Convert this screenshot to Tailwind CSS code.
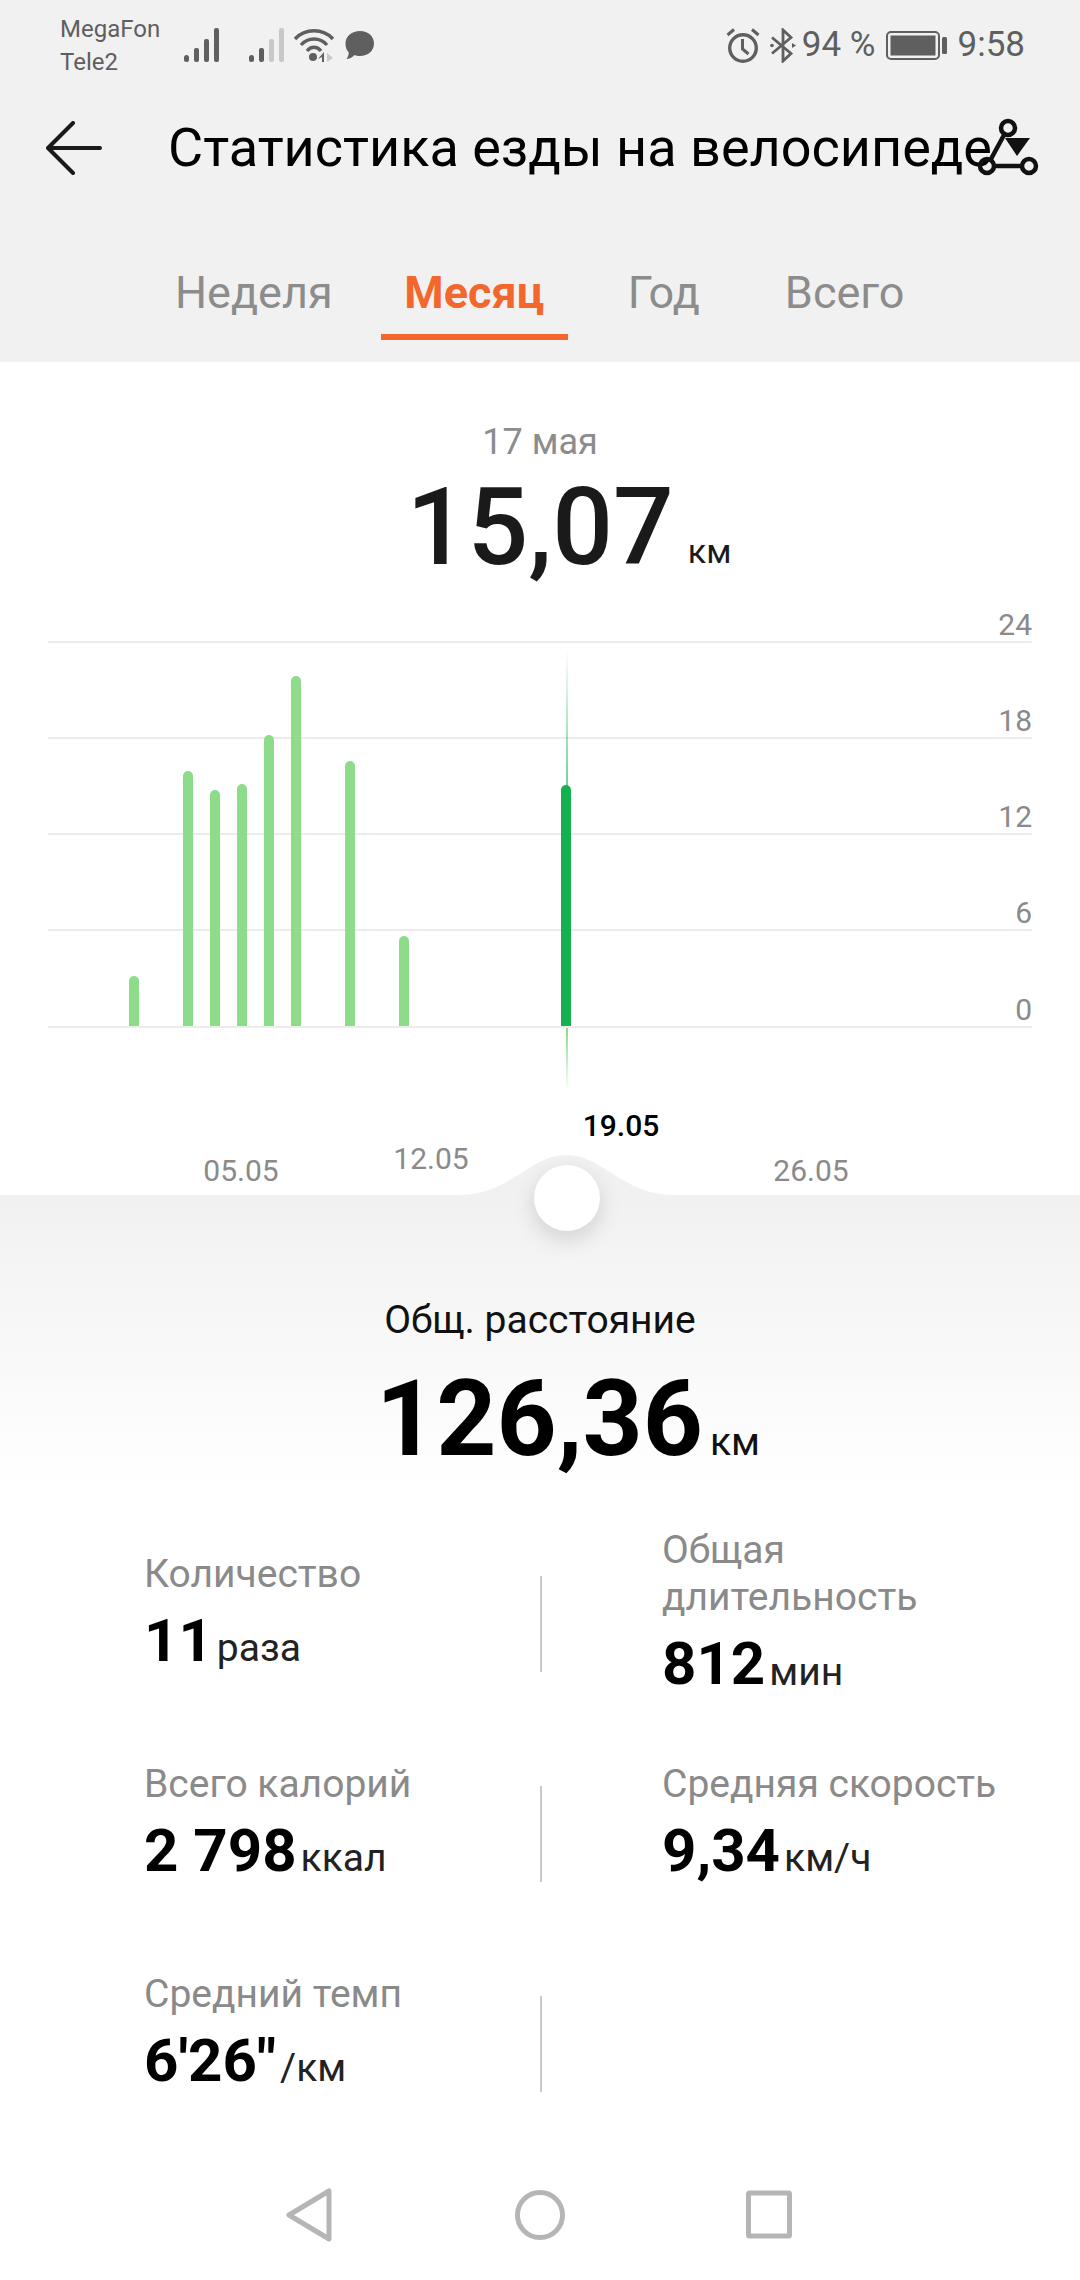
<!DOCTYPE html>
<html lang="ru">
<head>
<meta charset="UTF-8">
<title>Статистика езды на велосипеде</title>
<script src="https://cdn.jsdelivr.net/npm/@tailwindcss/browser@4"></script>
</head>
<body class="bg-white">
<div class="w-[1080px] h-[2280px] overflow-hidden flex flex-col font-['Roboto',sans-serif]">

  <!-- header -->
  <header class="relative h-[362px] shrink-0 bg-[#f1f1f1]">
    <div class="h-[90px] flex items-center pl-[60px] pr-[55px] text-[#5f5f5f]">
      <div class="w-[124px] text-[24px] leading-[33px] pt-[1px]">
        <div>MegaFon</div>
        <div>Tele2</div>
      </div>
      <svg class="w-[35px] h-[34px]" viewBox="0 0 35 34" fill="#5f5f5f"><rect x="0" y="27" width="5" height="7" rx="2.5"/><rect x="10" y="20" width="5" height="14" rx="2"/><rect x="20" y="11" width="5" height="23" rx="2"/><rect x="30" y="0" width="5" height="34" rx="2"/></svg>
      <svg class="w-[35px] h-[34px] ml-[30px]" viewBox="0 0 35 34"><rect x="0" y="27" width="5" height="7" rx="2.5" fill="#5f5f5f"/><rect x="10" y="20" width="5" height="14" rx="2" fill="#5f5f5f"/><rect x="20" y="11" width="5" height="23" rx="2" fill="#c8c8c8"/><rect x="30" y="0" width="5" height="34" rx="2" fill="#c8c8c8"/></svg>
      <svg class="w-[40px] h-[34px] ml-[10px]" viewBox="0 0 40 34" fill="none" stroke="#5f5f5f" stroke-width="3.4"><path d="M1 11C11 0 29 0 39 11"/><path d="M7 17C14 9 26 9 33 17"/><path d="M13 23C17 18 23 18 27 23"/><circle cx="19" cy="29" r="4" fill="#5f5f5f" stroke="none"/><path d="M30 24v10h-2v-5l-4 2z" fill="#5f5f5f" stroke="none"/><path d="M33 25l6 5-6 4z" fill="#c8c8c8" stroke="none"/></svg>
      <svg class="w-[29px] h-[29px] ml-[11px]" viewBox="0 0 29 29" fill="#5f5f5f"><path d="M15 0C23 0 29 5 29 12.500C29 20 23 25 15 25C13 25 11 24.700 9.500 24C7 26.500 4 28 1.500 28C3 26 3.800 23.500 3.800 21.500C1.400 19 0.500 16 0.500 12.500C0.500 5 7 0 15 0Z"/></svg>
      <div class="ml-auto flex items-center">
        <svg class="w-[34px] h-[35px]" viewBox="0 0 34 35" fill="none" stroke="#5f5f5f" stroke-width="3.4"><circle cx="17" cy="20" r="13.300"/><path d="M16.500 11v10l6 5" stroke-width="3"/><path d="M1.500 7L8 1.500M32.500 7L26 1.500" stroke-width="3"/></svg>
        <svg class="w-[27px] h-[35px] ml-[10px]" viewBox="0 0 27 35" fill="none" stroke="#5f5f5f" stroke-width="2.800"><path d="M2 9.500L21 25.500L13 33V2L21 9.500L2 25.500"/><circle cx="2" cy="17.500" r="1.800" fill="#5f5f5f" stroke="none"/><path d="M22 15l4 2.500-4 2.500z" fill="#5f5f5f" stroke="none"/></svg>
        <span class="ml-[5px] text-[35px] leading-[40px]">94 %</span>
        <svg class="w-[61px] h-[29px] ml-[10px]" viewBox="0 0 61 29" fill="none"><rect x="1" y="1" width="52" height="27" rx="4" stroke="#5f5f5f" stroke-width="2"/><rect x="4.500" y="4.500" width="45" height="20" fill="#5f5f5f"/><rect x="56" y="6" width="5" height="17" rx="1.500" fill="#5f5f5f"/></svg>
        <span class="ml-[11px] text-[35px] leading-[40px]">9:58</span>
      </div>
    </div>

    <div class="h-[116px] flex items-center">
      <svg class="w-[56px] h-[54px] ml-[46px] shrink-0" viewBox="0 0 56 54" fill="none" stroke="#1a1a1a" stroke-width="4" stroke-linecap="round" stroke-linejoin="round"><path d="M27 2L2 27L27 52M3 27H54"/></svg>
      <h1 class="ml-[66px] text-[54px] leading-[60px] font-normal text-black whitespace-nowrap">Статистика езды на велосипеде</h1>
    </div>

    <nav class="flex items-start text-[45px] leading-[56px] text-[#8c8c8c] pt-[59px]">
      <span class="ml-[175px]">Неделя</span>
      <div class="ml-[48px] w-[187px] h-[75px] flex justify-center border-b-[6px] border-[#f4672c] font-bold text-[#f4672c]">Месяц</div>
      <span class="ml-[60px]">Год</span>
      <span class="ml-[85px]">Всего</span>
    </nav>

    <svg class="absolute left-[974px] top-[112px] w-[66px] h-[66px]" viewBox="0 0 66 66" fill="none" stroke="#111" stroke-width="4.500"><circle cx="34" cy="16" r="7"/><circle cx="13" cy="54" r="7"/><circle cx="55" cy="54" r="7"/><path d="M30 23L17 47M20 54H48"/><path d="M31 26H56L43 44Z" fill="#111" stroke="none"/></svg>
  </header>

  <!-- chart -->
  <section class="relative h-[833px] shrink-0 bg-white">
    <div class="text-center text-[36px] leading-[44px] text-[#8c8c8c] pt-[58px]">17 мая</div>
    <div class="relative h-[120px] mt-[4px] flex justify-center items-end">
      <span class="ml-[58px] text-[107px] leading-[120px] font-medium text-[#1a1a1a]">15,07</span>
      <span class="ml-[14px] mb-[19px] text-[34px] leading-[36px] text-[#1a1a1a]">км</span>
    </div>

    <div class="relative mx-[48px] mt-[7px] text-[30px] leading-[30px] text-[#8a8a8a]">
      <div class="h-[48px] flex justify-end items-end border-b-2 border-[#ececec] pb-[1px]">24</div>
      <div class="h-[96px] flex justify-end items-end border-b-2 border-[#ececec] pb-[1px]">18</div>
      <div class="h-[96px] flex justify-end items-end border-b-2 border-[#ececec] pb-[1px]">12</div>
      <div class="h-[96px] flex justify-end items-end border-b-2 border-[#ececec] pb-[1px]">6</div>
      <div class="h-[97px] flex justify-end items-end border-b-2 border-[#ececec] pb-[1px]">0</div>

      <!-- bars -->
      <div class="absolute left-[72px] bottom-[2px] flex items-end">
        <div class="w-[27px] flex justify-center"><div class="w-[10px] rounded-t-[5px] bg-[#8cdc8a]" style="height:50px"></div></div>
      </div>
      <div class="absolute left-[126px] bottom-[2px] flex items-end">
        <div class="w-[27px] flex justify-center"><div class="w-[10px] rounded-t-[5px] bg-[#8cdc8a]" style="height:255px"></div></div>
        <div class="w-[27px] flex justify-center"><div class="w-[10px] rounded-t-[5px] bg-[#8cdc8a]" style="height:236px"></div></div>
        <div class="w-[27px] flex justify-center"><div class="w-[10px] rounded-t-[5px] bg-[#8cdc8a]" style="height:242px"></div></div>
        <div class="w-[27px] flex justify-center"><div class="w-[10px] rounded-t-[5px] bg-[#8cdc8a]" style="height:291px"></div></div>
        <div class="w-[27px] flex justify-center"><div class="w-[10px] rounded-t-[5px] bg-[#8cdc8a]" style="height:350px"></div></div>
        <div class="w-[27px]"></div>
        <div class="w-[27px] flex justify-center"><div class="w-[10px] rounded-t-[5px] bg-[#8cdc8a]" style="height:265px"></div></div>
        <div class="w-[27px]"></div>
        <div class="w-[27px] flex justify-center"><div class="w-[10px] rounded-t-[5px] bg-[#8cdc8a]" style="height:90px"></div></div>
        <div class="w-[27px]"></div>
        <div class="w-[27px]"></div>
        <div class="w-[27px]"></div>
        <div class="w-[27px]"></div>
        <div class="w-[27px]"></div>
        <div class="w-[27px] flex justify-center"><div class="w-[10px] rounded-t-[5px] bg-[#14b14f]" style="height:241px"></div></div>
      </div>
      <!-- selected day marker -->
      <div class="absolute left-[518px] top-[54px] w-[2px] h-[138px] bg-linear-to-b from-transparent to-[#14b14f]/60"></div>
      <div class="absolute left-[518px] top-[433px] w-[2px] h-[64px] bg-linear-to-b from-[#8cdc8a] to-transparent"></div>
    </div>

    <!-- axis -->
    <div class="flex h-[167px] pl-[146px] text-[30px] leading-[36px] text-[#8a8a8a] text-center">
      <div class="w-[190px] flex items-end justify-center pb-[6px]">05.05</div>
      <div class="w-[190px] flex items-end justify-center pb-[18px]">12.05</div>
      <div class="w-[190px] flex items-end justify-center pb-[51px] font-medium text-black">19.05</div>
      <div class="w-[190px] flex items-end justify-center pb-[6px]">26.05</div>
    </div>
  </section>

  <!-- totals -->
  <section class="relative flex-1 bg-linear-to-b from-[#f1f1f1] to-white to-[27%]">
    <svg class="absolute left-[460px] -top-[40px] w-[213px] h-[41px]" viewBox="0 0 213 41" fill="#f1f1f1"><path d="M0 41V40C50 40 70 0 106.500 0C143 0 163 40 213 40V41Z"/></svg>
    <div class="absolute left-[534px] -top-[30px] w-[66px] h-[66px] rounded-full bg-white shadow-[0_8px_22px_rgba(0,0,0,0.14)]"></div>

    <div class="text-center text-[39px] leading-[46px] text-[#111] pt-[102px]">Общ. расстояние</div>
    <div class="flex justify-center items-end h-[120px] mt-[17px]">
      <span class="ml-[56px] text-[105px] leading-[120px] font-bold text-black">126,36</span>
      <span class="ml-[7px] mb-[18px] text-[39px] leading-[40px] text-[#111]">км</span>
    </div>

    <div class="grid grid-cols-[396px_2px_1fr] grid-rows-[210px_210px_210px] items-center pl-[144px] mt-[39px]">
      <div>
        <div class="text-[39px] leading-[47px] text-[#8a8a8a]">Количество</div>
        <div class="h-[100px] pb-[14px] flex items-center"><span class="text-[60px] font-bold text-black">11</span><span class="ml-[4px] mt-[16px] text-[39px] text-[#222]">раза</span></div>
      </div>
      <div class="h-[96px] bg-[#c9c9c9]"></div>
      <div class="pl-[120px]">
        <div class="text-[39px] leading-[47px] text-[#8a8a8a]">Общая<br>длительность</div>
        <div class="h-[100px] pb-[14px] flex items-center"><span class="text-[60px] font-bold text-black">812</span><span class="ml-[4px] mt-[16px] text-[39px] text-[#222]">мин</span></div>
      </div>

      <div>
        <div class="text-[39px] leading-[47px] text-[#8a8a8a]">Всего калорий</div>
        <div class="h-[100px] pb-[14px] flex items-center"><span class="text-[60px] font-bold text-black">2 798</span><span class="ml-[4px] mt-[16px] text-[39px] text-[#222]">ккал</span></div>
      </div>
      <div class="h-[96px] bg-[#c9c9c9]"></div>
      <div class="pl-[120px]">
        <div class="text-[39px] leading-[47px] text-[#8a8a8a]">Средняя скорость</div>
        <div class="h-[100px] pb-[14px] flex items-center"><span class="text-[60px] font-bold text-black">9,34</span><span class="ml-[4px] mt-[16px] text-[39px] text-[#222]">км/ч</span></div>
      </div>

      <div>
        <div class="text-[39px] leading-[47px] text-[#8a8a8a]">Средний темп</div>
        <div class="h-[100px] pb-[14px] flex items-center"><span class="text-[60px] font-bold text-black">6'26"</span><span class="ml-[4px] mt-[16px] text-[39px] text-[#222]">/км</span></div>
      </div>
      <div class="h-[96px] bg-[#c9c9c9]"></div>
      <div></div>
    </div>

    <!-- navigation bar -->
    <div class="absolute left-0 right-0 bottom-0 h-[130px] flex items-start pt-[38px]">
      <svg class="ml-[285px] w-[48px] h-[54px]" viewBox="0 0 48 54" fill="none" stroke="#b5b5b5" stroke-width="5" stroke-linejoin="round"><path d="M44 3V51L4 27Z"/></svg>
      <svg class="ml-[182px] w-[50px] h-[54px]" viewBox="0 0 50 54" fill="none" stroke="#b5b5b5" stroke-width="5"><circle cx="25" cy="27" r="22.500"/></svg>
      <svg class="ml-[181px] w-[46px] h-[54px]" viewBox="0 0 46 54" fill="none" stroke="#b5b5b5" stroke-width="5" stroke-linejoin="round"><rect x="2.500" y="5" width="41" height="43" rx="1"/></svg>
    </div>
  </section>
</div>
</body>
</html>
